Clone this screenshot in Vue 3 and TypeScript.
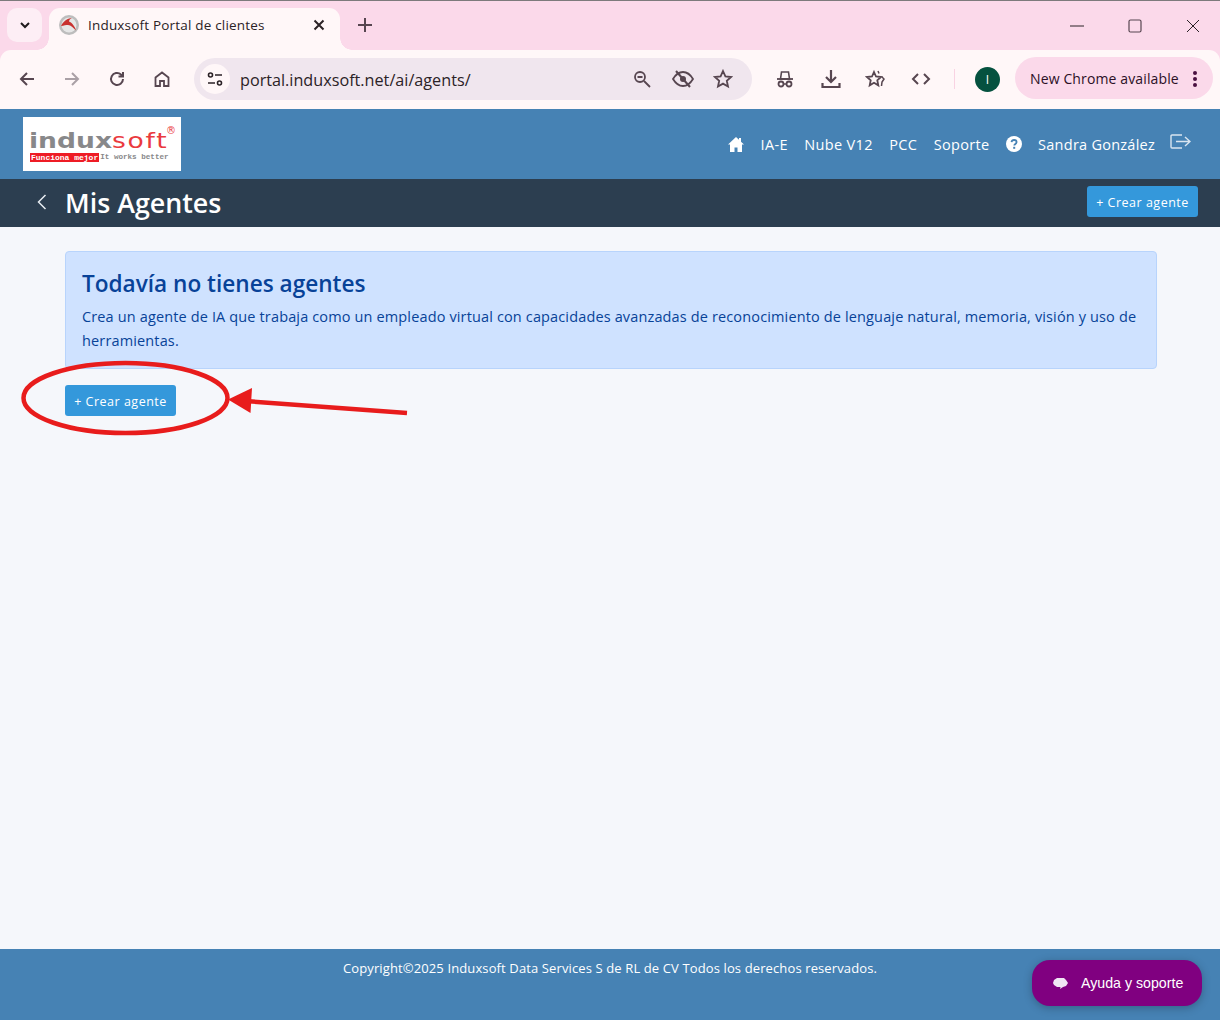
<script setup lang="ts">
const navLinks = ['IA-E', 'Nube V12', 'PCC', 'Soporte'];
</script>

<template>
  <div class="page">
    <header class="browser">
      <div class="tabstrip">
        <button class="tab-search">
          <svg width="14" height="14" viewBox="0 0 14 14"><path d="M3 5l4 4 4-4" fill="none" stroke="#1f1a1c" stroke-width="2" /></svg>
        </button>
        <div class="tab">
          <svg class="favicon" width="20" height="20" viewBox="0 0 20 20">
            <circle cx="10" cy="10" r="10" fill="#bdbdbd" />
            <circle cx="10" cy="10" r="7.500" fill="#e6e6e6" />
            <path d="M2 11C4 7 8 3 13 3c-2 1-3 2-3 3.500 3 1 6 5 7 9-3-3-5-5.500-8-5.500-2 0-4 .5-7 1z" fill="#c8312f" />
          </svg>
          <span class="tab-title">Induxsoft Portal de clientes</span>
          <svg class="tab-close" width="12" height="12" viewBox="0 0 12 12"><path d="M1.500 1.500l9 9M10.500 1.500l-9 9" stroke="#2b2226" stroke-width="2" /></svg>
        </div>
        <svg class="new-tab" width="14" height="14" viewBox="0 0 14 14"><path d="M7 0v14M0 7h14" stroke="#574650" stroke-width="2" /></svg>
        <div class="window-controls">
          <svg width="14" height="14" viewBox="0 0 14 14"><path d="M0 7h14" stroke="#2b2226" stroke-width="1" /></svg>
          <svg width="14" height="14" viewBox="0 0 14 14"><rect x="1" y="1" width="12" height="12" rx="1.500" fill="none" stroke="#574650" stroke-width="1.200" /></svg>
          <svg width="14" height="14" viewBox="0 0 14 14"><path d="M1 1l12 12M13 1L1 13" stroke="#2b2226" stroke-width="1" /></svg>
        </div>
      </div>
      <div class="toolbar">
        <div class="toolbar-nav">
          <svg width="18" height="18" viewBox="0 0 18 18"><path d="M16 9H3M9 3L3 9l6 6" fill="none" stroke="#574650" stroke-width="2" /></svg>
          <svg width="18" height="18" viewBox="0 0 18 18"><path d="M2 9h13M9 3l6 6-6 6" fill="none" stroke="#aaa0a6" stroke-width="2" /></svg>
          <svg width="18" height="18" viewBox="0 0 18 18"><path d="M15 9a6 6 0 1 1-2-4.500L15 6M15 2v4.500h-4.500" fill="none" stroke="#574650" stroke-width="2" /></svg>
          <svg width="18" height="18" viewBox="0 0 18 18"><path d="M2.500 16V7.500L9 2.500l6.500 5V16H11v-5H7v5z" fill="none" stroke="#574650" stroke-width="1.800" /></svg>
        </div>
        <div class="omnibox">
          <span class="site-info">
            <svg width="16" height="14" viewBox="0 0 16 14">
              <circle cx="3.500" cy="3" r="2" fill="none" stroke="#2b2226" stroke-width="1.600" />
              <path d="M8 3h7M1 11h7" stroke="#2b2226" stroke-width="1.600" />
              <circle cx="12.500" cy="11" r="2" fill="none" stroke="#2b2226" stroke-width="1.600" />
            </svg>
          </span>
          <span class="url">portal.induxsoft.net/ai/agents/</span>
          <div class="omni-icons">
            <svg width="18" height="18" viewBox="0 0 18 18"><circle cx="7" cy="7" r="5" fill="none" stroke="#574650" stroke-width="1.800" /><path d="M4.500 7h5M11 11l6 6" stroke="#574650" stroke-width="1.800" /></svg>
            <svg width="22" height="18" viewBox="0 0 22 18"><path d="M1 9c3-5 6-7 10-7s7 2 10 7c-3 5-6 7-10 7S4 14 1 9z" fill="none" stroke="#574650" stroke-width="1.800" /><circle cx="11" cy="9" r="3" fill="#574650" /><path d="M4 1l14 16" stroke="#574650" stroke-width="2" /></svg>
            <svg width="20" height="20" viewBox="0 0 20 20"><path d="M10 2l2.400 5.400 5.600.6-4.200 3.800 1.200 5.700L10 14.600 5 17.500l1.200-5.700L2 8l5.600-.6z" fill="none" stroke="#574650" stroke-width="1.800" /></svg>
          </div>
        </div>
        <div class="extensions">
          <svg width="18" height="18" viewBox="0 0 18 18"><path d="M4.500 9l1-7h7l1 7z" fill="none" stroke="#574650" stroke-width="1.600" /><path d="M1 9h16" stroke="#574650" stroke-width="1.800" /><circle cx="5" cy="14" r="2.500" fill="none" stroke="#574650" stroke-width="1.800" /><circle cx="13" cy="14" r="2.500" fill="none" stroke="#574650" stroke-width="1.800" /><path d="M7.500 14h3" stroke="#574650" stroke-width="1.500" /></svg>
          <svg width="20" height="20" viewBox="0 0 20 20"><path d="M10 1v12M5 8l5 5 5-5" fill="none" stroke="#574650" stroke-width="2.200" /><path d="M1.500 14v4h17v-4" fill="none" stroke="#574650" stroke-width="2.200" /></svg>
          <svg width="22" height="20" viewBox="0 0 22 20"><path d="M9 3l2 4.500 5 .5-3.700 3.300 1 5L9 13.700 4.700 16.300l1-5L2 8l5-.5z" fill="none" stroke="#574650" stroke-width="1.800" /><path d="M13 2l1 2.500M17 8l2 2-2 3-.5 4" fill="none" stroke="#574650" stroke-width="1.500" /></svg>
          <svg width="20" height="14" viewBox="0 0 20 14"><path d="M7 2L2 7l5 5M13 2l5 5-5 5" fill="none" stroke="#574650" stroke-width="2" /></svg>
        </div>
        <span class="toolbar-sep" />
        <span class="avatar">I</span>
        <div class="update-pill">
          <span>New Chrome available</span>
          <svg width="4" height="16" viewBox="0 0 4 16"><circle cx="2" cy="2" r="2" fill="#4a1040" /><circle cx="2" cy="8" r="2" fill="#4a1040" /><circle cx="2" cy="14" r="2" fill="#4a1040" /></svg>
        </div>
      </div>
    </header>

    <nav class="navbar">
      <div class="logo">
        <div class="logo-word"><span class="logo-indux">indux</span><span class="logo-soft">soft</span></div>
        <span class="logo-reg">®</span>
        <div class="logo-tag"><span class="logo-tag-red">Funciona mejor</span><span class="logo-tag-grey">It works better</span></div>
      </div>
      <div class="nav-items">
        <svg class="nav-home" width="16" height="15" viewBox="0 0 16 15"><path d="M8 0L0 7.500h2V15h4.500v-4.500h3V15H14V7.500h2l-3-2.800V1h-2v1.800z" fill="#fff" /></svg>
        <a v-for="link in navLinks" :key="link" class="nav-link">{{ link }}</a>
        <svg class="nav-help" width="16" height="16" viewBox="0 0 16 16">
          <circle cx="8" cy="8" r="8" fill="#fff" />
          <path d="M5.500 6.200C5.700 4.800 6.700 4 8.100 4c1.500 0 2.500.9 2.500 2.100 0 1.900-2.300 1.900-2.300 3.500" fill="none" stroke="#4682b4" stroke-width="1.800" />
          <rect x="7.200" y="10.800" width="2" height="2" fill="#4682b4" />
        </svg>
        <a class="nav-link nav-user">Sandra González</a>
        <svg class="nav-logout" width="21" height="16" viewBox="0 0 21 16"><path d="M12 1H2a1 1 0 0 0-1 1v11a1 1 0 0 0 1 1h10" fill="none" stroke="#d9e5f0" stroke-width="1.400" /><path d="M6 7.500h14M15 3l5 4.500-5 4.500" fill="none" stroke="#d9e5f0" stroke-width="1.400" /></svg>
      </div>
    </nav>

    <div class="titlebar">
      <svg class="back" width="11" height="16" viewBox="0 0 11 16"><path d="M9.500 1l-7 7 7 7" fill="none" stroke="#e8edf2" stroke-width="1.500" /></svg>
      <h1>Mis Agentes</h1>
      <button class="btn btn-top">+ Crear agente</button>
    </div>

    <main class="content">
      <section class="notice">
        <h2>Todavía no tienes agentes</h2>
        <p>Crea un agente de IA que trabaja como un empleado virtual con capacidades avanzadas de reconocimiento de lenguaje natural, memoria, visión y uso de herramientas.</p>
      </section>
      <button class="btn">+ Crear agente</button>
    </main>

    <footer class="footer">
      <p>Copyright©2025 Induxsoft Data Services S de RL de CV Todos los derechos reservados.</p>
      <button class="help-pill">
        <svg width="15" height="11" viewBox="0 0 15 11"><path d="M4 0h7l2 2 2 3-2 3-3 1-3 2 .500-2H4L1 7 0 5l1-3z" fill="#f0e6f4" /></svg>
        <span>Ayuda y soporte</span>
      </button>
    </footer>

    <!-- red hand-drawn annotation over the page -->
    <svg class="annotation" width="420" height="90" viewBox="0 0 420 90">
      <ellipse cx="125.500" cy="38" rx="102" ry="35" fill="none" stroke="#e81c1c" stroke-width="4.500" />
      <path d="M407 53L245 41" stroke="#e81c1c" stroke-width="4.500" fill="none" />
      <path d="M228 39.500L252 28 250.500 53z" fill="#e81c1c" />
    </svg>
  </div>
</template>

<style scoped>
.page {
  position: relative;
  width: 1220px;
  height: 1020px;
  display: flex;
  flex-direction: column;
  overflow: hidden;
  background: #f5f7fb;
  font-family: "Open Sans", "Noto Sans", sans-serif;
}

.browser {
  height: 109px;
  flex: none;
  background: #fbd9ea;
  border-top: 1px solid #7d7a7c;
  box-sizing: border-box;
}

.tabstrip {
  height: 49px;
  display: flex;
  align-items: flex-start;
  padding-left: 7px;
  padding-top: 7px;
  box-sizing: border-box;
}

.tab-search {
  width: 35px;
  height: 34px;
  padding: 0;
  margin-right: 7px;
  border: 0;
  border-radius: 10px;
  background: #fdeef5;
  display: flex;
  align-items: center;
  justify-content: center;
}

.tab {
  position: relative;
  width: 291px;
  height: 42px;
  display: flex;
  align-items: center;
  padding: 0 15px 9px 10px;
  box-sizing: border-box;
  background: #fff7f8;
  border-radius: 11px 11px 0 0;
}

.tab::before,
.tab::after {
  content: "";
  position: absolute;
  bottom: 0;
  width: 12px;
  height: 12px;
}

.tab::before {
  left: -12px;
  background: radial-gradient(circle at 0 0, transparent 11.500px, #fff7f8 12px);
}

.tab::after {
  right: -12px;
  background: radial-gradient(circle at 100% 0, transparent 11.500px, #fff7f8 12px);
}

.favicon {
  flex: none;
}

.tab-title {
  margin-left: 9px;
  flex: 1;
  font-size: 13.500px;
  color: #2b2226;
  letter-spacing: 0.190px;
}

.new-tab {
  margin: 10px 0 0 18px;
}

.window-controls {
  margin-left: auto;
  margin-top: 11px;
  padding-right: 20px;
  display: flex;
  gap: 44px;
}

.toolbar {
  position: relative;
  height: 59px;
  display: flex;
  align-items: center;
  background: #fff7f8;
  border-radius: 11px 11px 0 0;
  padding: 0 7px 1px 18px;
  box-sizing: border-box;
}

.toolbar-nav {
  display: flex;
  align-items: center;
  gap: 27px;
  width: 176px;
  flex: none;
}

.omnibox {
  width: 558px;
  height: 42px;
  flex: none;
  display: flex;
  align-items: center;
  padding: 0 19px 0 6px;
  box-sizing: border-box;
  border-radius: 21px;
  background: #f0e6ee;
}

.site-info {
  width: 30px;
  height: 30px;
  border-radius: 50%;
  background: #fff7f8;
  display: flex;
  align-items: center;
  justify-content: center;
}

.url {
  margin-left: 10px;
  padding-top: 1px;
  font-size: 16.200px;
  color: #2b2226;
}

.omni-icons {
  margin-left: auto;
  display: flex;
  align-items: center;
}

.omni-icons svg:nth-child(1) {
  margin-right: 21px;
}

.omni-icons svg:nth-child(2) {
  margin-right: 19px;
}

.extensions {
  margin-left: 24px;
  display: flex;
  align-items: center;
  gap: 25px;
}

.extensions svg:nth-child(1) {
  margin-right: 2px;
}

.extensions svg:nth-child(3) {
  margin-left: -1px;
  margin-right: -1px;
}

.toolbar-sep {
  width: 1px;
  height: 20px;
  margin-left: 23px;
  background: #f9d3e3;
}

.avatar {
  width: 25px;
  height: 25px;
  margin-left: 20px;
  border-radius: 50%;
  background: #05513f;
  color: #fff;
  font-size: 12px;
  line-height: 25px;
  text-align: center;
}

.update-pill {
  width: 198px;
  height: 42px;
  margin: 0 0 2px 15px;
  padding: 1px 16px 0 15px;
  box-sizing: border-box;
  border-radius: 21px;
  background: #fbd9ea;
  display: flex;
  align-items: center;
  justify-content: space-between;
  font-size: 14px;
  letter-spacing: 0.130px;
  color: #2b1026;
}

.navbar {
  height: 70px;
  flex: none;
  display: flex;
  background: #4682b4;
  padding: 8px 29px 0 23px;
  box-sizing: border-box;
}

.logo {
  position: relative;
  width: 158px;
  height: 54px;
  padding: 11px 0 0 6px;
  box-sizing: border-box;
  background: #fff;
  font-family: "Liberation Mono", monospace;
}

.logo-word {
  height: 25px;
  font-family: "DejaVu Sans", sans-serif;
  font-size: 21.500px;
  line-height: 25px;
  white-space: nowrap;
  transform: scaleX(1.235);
  transform-origin: left center;
}

.logo-indux {
  font-weight: 700;
  color: #88888a;
}

.logo-soft {
  color: #ea3a3e;
  font-weight: 400;
  letter-spacing: 1.400px;
}

.logo-reg {
  position: absolute;
  top: 7px;
  right: 5px;
  font-family: "DejaVu Sans", sans-serif;
  font-size: 10px;
  line-height: 14px;
  color: #ea3a3e;
}

.logo-tag {
  display: flex;
  align-items: center;
  margin-left: 1px;
  font-weight: 700;
  line-height: 9px;
  white-space: nowrap;
}

.logo-tag-red {
  padding: 0 1px;
  background: #ee1c25;
  color: #fff;
  font-size: 8px;
}

.logo-tag-grey {
  margin-left: 1px;
  color: #88888a;
  font-size: 7.600px;
}

.nav-items {
  margin-left: auto;
  height: 54px;
  display: flex;
  align-items: center;
  font-size: 14.500px;
  letter-spacing: 0.330px;
  color: #fff;
}

.nav-home {
  margin-right: 17px;
}

.nav-link {
  margin-right: 16.500px;
}

.nav-help {
  margin: 0 16px 0 0;
}

.nav-user {
  margin-right: 15px;
  letter-spacing: 0.250px;
}

.nav-logout {
  margin-top: -4px;
}

.titlebar {
  height: 48px;
  flex: none;
  display: flex;
  align-items: center;
  padding: 0 22px 0 36px;
  box-sizing: border-box;
  background: #2c3e50;
}

.back {
  margin-right: 18px;
  margin-top: -2px;
}

.titlebar h1 {
  margin: 0;
  font-size: 26.800px;
  font-weight: 600;
  line-height: 48px;
  color: #fff;
}

.btn {
  width: 111px;
  height: 31px;
  padding: 1px 0 0;
  border: 0;
  border-radius: 3px;
  background: #3498db;
  color: #fff;
  font-family: inherit;
  font-size: 12.500px;
  letter-spacing: 0.500px;
}

.btn-top {
  margin-left: auto;
  margin-top: -3px;
}

.content {
  flex: 1;
  padding: 24px 63px 0 65px;
}

.notice {
  height: 118px;
  padding: 16px 16px 0;
  margin-bottom: 16px;
  box-sizing: border-box;
  border: 1px solid #b8d4fc;
  border-radius: 4px;
  background: #cfe2ff;
  color: #084298;
}

.notice h2 {
  margin: 0 0 5px;
  font-size: 22.600px;
  font-weight: 600;
  line-height: 32px;
}

.notice p {
  margin: 0;
  font-size: 14.500px;
  letter-spacing: 0.140px;
  line-height: 24px;
}

.footer {
  position: relative;
  height: 71px;
  flex: none;
  background: #4682b4;
  color: #fff;
}

.footer p {
  margin: 0;
  padding-top: 10px;
  font-size: 13px;
  letter-spacing: 0.120px;
  line-height: 18px;
  text-align: center;
}

.help-pill {
  position: absolute;
  right: 18px;
  top: 11px;
  width: 170px;
  height: 46px;
  padding: 0 0 0 21px;
  display: flex;
  align-items: center;
  gap: 13px;
  border: 0;
  border-radius: 18px;
  background: #800080;
  color: #fff;
  font-family: "Liberation Sans", sans-serif;
  font-size: 14.200px;
  box-shadow: 0 2px 8px rgba(0, 0, 0, 0.25);
}

.annotation {
  position: absolute;
  left: 0;
  top: 360px;
  pointer-events: none;
}
</style>
